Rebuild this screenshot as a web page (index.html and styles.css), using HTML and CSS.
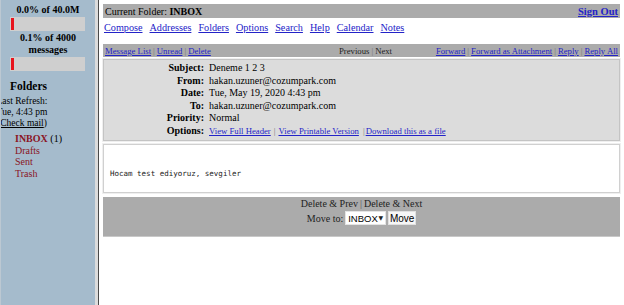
FILE: index.html
```html
<!DOCTYPE html>
<html lang="en">
<head>
  <meta charset="UTF-8" />
  <title>SquirrelMail - Read Message</title>
  <link rel="stylesheet" href="styles.css">
</head>
<body>
  <div class="frames">
    <aside class="left">
      <div class="quota-label">0.0% of 40.0M</div>
      <div class="quota-bar"><span class="quota-fill"></span></div>
      <div class="quota-label">0.1% of 4000<br>messages</div>
      <div class="quota-bar"><span class="quota-fill"></span></div>

      <div class="folders-title">Folders</div>
      <div class="refresh">
        Last Refresh:<br>
        Tue, 4:43 pm<br>
        (<a href="#">Check mail</a>)
      </div>

      <ul class="folder-list">
        <li><a href="#" class="current">INBOX</a> <span class="count">(1)</span></li>
        <li><a href="#">Drafts</a></li>
        <li><a href="#">Sent</a></li>
        <li><a href="#">Trash</a></li>
      </ul>
    </aside>

    <div class="divider"></div>

    <main class="right">
      <div class="topbar">
        <span>Current Folder: <b>INBOX</b></span>
        <a href="#" class="signout">Sign Out</a>
      </div>
      <nav class="menu">
        <a href="#">Compose</a>
        <a href="#">Addresses</a>
        <a href="#">Folders</a>
        <a href="#">Options</a>
        <a href="#">Search</a>
        <a href="#">Help</a>
        <a href="#">Calendar</a>
        <a href="#">Notes</a>
      </nav>

      <div class="navbar">
        <div class="nav-left">
          <a href="#">Message List</a><span class="sep">|</span><a href="#">Unread</a><span class="sep">|</span><a href="#">Delete</a>
        </div>
        <div class="nav-center">Previous<span class="sep">|</span>Next</div>
        <div class="nav-right">
          <a href="#">Forward</a><span class="sep">|</span><a href="#">Forward as Attachment</a><span class="sep">|</span><a href="#">Reply</a><span class="sep">|</span><a href="#">Reply All</a>
        </div>
      </div>

      <div class="headers">
        <div class="hlabel">Subject:</div><div class="hvalue">Deneme 1 2 3</div>
        <div class="hlabel">From:</div><div class="hvalue">hakan.uzuner@cozumpark.com</div>
        <div class="hlabel">Date:</div><div class="hvalue">Tue, May 19, 2020 4:43 pm</div>
        <div class="hlabel">To:</div><div class="hvalue">hakan.uzuner@cozumpark.com</div>
        <div class="hlabel">Priority:</div><div class="hvalue">Normal</div>
        <div class="hlabel">Options:</div>
        <div class="hvalue options">
          <a href="#">View Full Header</a><span class="sep">|</span><a href="#">View Printable Version</a><span class="sep">|</span><a href="#">Download this as a file</a>
        </div>
      </div>

      <div class="message">
        <pre>Hocam test ediyoruz, sevgiler</pre>
      </div>

      <div class="actions">
        <div>Delete &amp; Prev<span class="sep">|</span>Delete &amp; Next</div>
        <form class="move">
          Move to:
          <span class="select-wrap">
            <select><option>INBOX</option><option>Drafts</option><option>Sent</option><option>Trash</option></select>
          </span>
          <button type="button">Move</button>
        </form>
      </div>
    </main>
  </div>
</body>
</html>
```

FILE: styles.css
```css
html, body {
  margin: 0;
  height: 100%;
}
body {
  font-family: "Liberation Serif", "Times New Roman", serif;
  font-size: 10px;
  color: #000;
  background: #fff;
  overflow: hidden;
}
a {
  color: #2323c8;
}
.frames {
  display: flex;
  height: 100%;
}

/* left frame */
.left {
  width: 95px;
  flex: none;
  background: #a5bbcc;
  border-left: 1px solid #bcc8d2;
  padding-top: 4px;
  box-sizing: border-box;
  overflow: hidden;
}
.quota-label {
  font-weight: bold;
  text-align: center;
  line-height: 12px;
}
.quota-bar {
  margin: 1px 10px 1px 9px;
  height: 14px;
  background: #cfcfcf;
  padding: 1px;
  box-sizing: border-box;
}
.quota-fill {
  display: block;
  width: 3px;
  height: 12px;
  background: #e8141c;
}
.folders-title {
  margin: 8px 0 0 9px;
  font-size: 11.5px;
  font-weight: bold;
  line-height: 15px;
}
.refresh {
  width: 60px;
  margin: 2px 0 0 -9px;
  text-align: center;
  font-size: 9.5px;
  line-height: 11px;
}
.refresh a {
  color: #000;
}
.folder-list {
  list-style: none;
  margin: 4px 0 0 14px;
  padding: 0;
  line-height: 11.5px;
}
.folder-list a {
  color: #8a1424;
  text-decoration: none;
}
.folder-list a.current {
  font-weight: bold;
}

/* frame splitter */
.divider {
  width: 4px;
  flex: none;
  background: #dcdcdc;
  border-right: 1px solid #4a4a4a;
  box-sizing: border-box;
}

/* right frame */
.right {
  flex: 1;
  padding: 4px 4px 0 4px;
}
.topbar {
  background: #ababab;
  height: 14px;
  display: flex;
  justify-content: space-between;
  align-items: center;
  padding: 0 2px;
}
.signout {
  font-weight: bold;
  font-size: 10.5px;
}
.menu {
  display: flex;
  gap: 7px;
  height: 14px;
  align-items: center;
  margin-top: 2px;
  padding-left: 1px;
  font-size: 10.2px;
}
.sep {
  color: #777;
  margin: 0 3px;
}
.navbar {
  margin-top: 10px;
  background: #ababab;
  height: 13px;
  display: grid;
  grid-template-columns: 1fr auto 1fr;
  align-items: center;
  padding: 0 2px;
  font-size: 8.7px;
}
.navbar .sep {
  margin: 0 2px;
}
.nav-center {
  padding-left: 8px;
  color: #222;
}
.nav-right {
  text-align: right;
}
.headers {
  margin-top: 2px;
  height: 82px;
  box-sizing: border-box;
  background: #dcdcdc;
  border: 1px solid #c4c4c4;
  box-shadow: 0 0 0 1px #efefef;
  padding-top: 2px;
  display: grid;
  grid-template-columns: 100px 1fr;
  column-gap: 5px;
  line-height: 12.5px;
  align-content: start;
}
.hlabel {
  font-weight: bold;
  text-align: right;
}
.options {
  font-size: 8.7px;
}
.options .sep {
  margin: 0 3px 0 3px;
}
.options .sep:last-of-type {
  margin: 0 1px 0 4px;
}
.message {
  margin-top: 3px;
  height: 49px;
  box-sizing: border-box;
  border: 1px solid #d0d0d0;
  box-shadow: 0 0 0 1px #efefef;
  padding: 24px 0 0 6px;
}
.message pre {
  margin: 0;
  font-family: "DejaVu Sans Mono", "Liberation Mono", monospace;
  font-size: 7.5px;
  line-height: 10px;
  color: #222;
}
.actions {
  margin-top: 4px;
  height: 40px;
  box-sizing: border-box;
  background: #ababab;
  border-bottom: 1px solid #c8c8c8;
  padding-top: 1px;
  text-align: center;
  line-height: 11px;
  color: #222;
}
.actions .sep {
  color: #555;
  margin: 0 2px;
}
.move {
  margin: 2px 0 0;
  display: flex;
  justify-content: center;
  align-items: center;
  gap: 2px;
}
.select-wrap {
  position: relative;
  display: inline-block;
  height: 14px;
}
.select-wrap::after {
  content: "\25BC";
  position: absolute;
  right: 3px;
  top: 4px;
  font-size: 6px;
  line-height: 6px;
  pointer-events: none;
  font-family: "DejaVu Sans", sans-serif;
}
select {
  appearance: none;
  -webkit-appearance: none;
  display: block;
  width: 41px;
  height: 14px;
  border: 1px solid #e4e4e4;
  border-radius: 0;
  background: #fff;
  font-family: "Liberation Sans", Arial, sans-serif;
  font-size: 9.5px;
  padding: 0 0 0 2px;
  color: #000;
}
button {
  height: 14px;
  width: 28px;
  padding: 0;
  border: 1px solid #e0e0e0;
  background: #f6f6f6;
  font-family: "Liberation Sans", Arial, sans-serif;
  font-size: 10px;
  color: #000;
}
```
